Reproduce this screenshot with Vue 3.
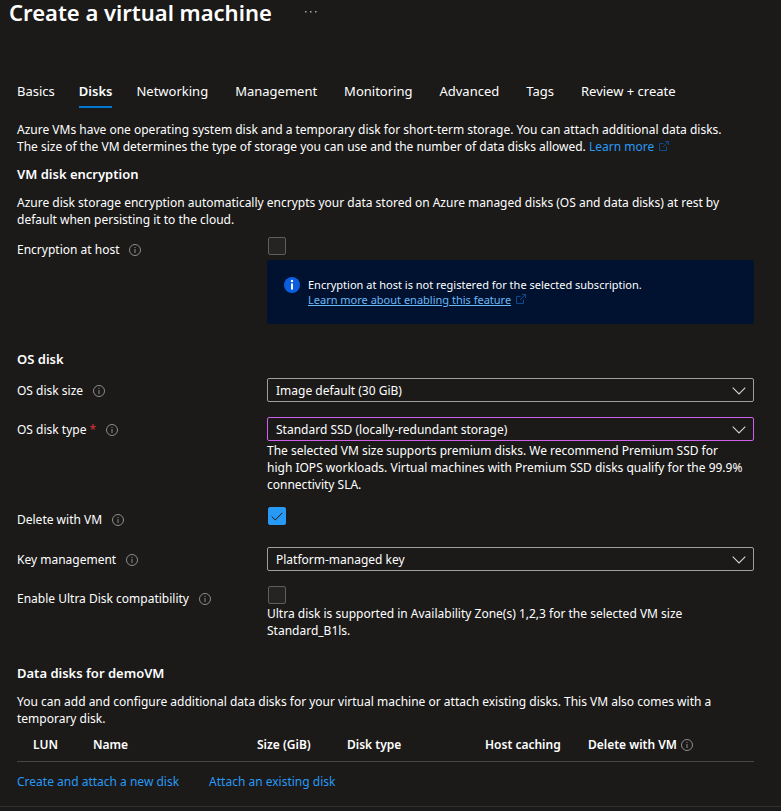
<script setup>
import { ref, h } from 'vue'

const tabs = ['Basics', 'Disks', 'Networking', 'Management', 'Monitoring', 'Advanced', 'Tags', 'Review + create']
const activeTab = ref('Disks')

const encryptionAtHost = ref(false)
const deleteWithVm = ref(true)
const ultraDisk = ref(false)
const diskSize = ref('Image default (30 GiB)')
const diskType = ref('Standard SSD (locally-redundant storage)')
const keyManagement = ref('Platform-managed key')

const InfoIcon = () =>
  h('svg', { viewBox: '0 0 12 12', width: 12, height: 12, 'aria-hidden': 'true' }, [
    h('circle', { cx: 6, cy: 6, r: 5.5, fill: 'none', stroke: '#8f8d8b' }),
    h('path', { d: 'M6 5v4M6 3v1', fill: 'none', stroke: '#8f8d8b' }),
  ])

const ExternalIcon = () =>
  h('svg', { viewBox: '0 0 10 10', width: 10, height: 10, 'aria-hidden': 'true' }, [
    h('path', {
      d: 'M4.5 2.5h-4v7h7v-4M6 .5h3.5v3.5M9.5 .5L4 6',
      fill: 'none',
      stroke: '#0d4a8c',
    }),
  ])

const Chevron = () =>
  h('svg', { viewBox: '0 0 14 8', width: 14, height: 8, 'aria-hidden': 'true' }, [
    h('path', { d: 'M.7 .7L7 7L13.3 .7', fill: 'none', stroke: '#d6d4d2', 'stroke-width': 1.1 }),
  ])
</script>

<template>
  <div class="page">
    <header class="title-bar">
      <h1>Create a virtual machine</h1>
      <button class="more" type="button" aria-label="More actions">
        <svg viewBox="0 0 12 2" width="12" height="2" aria-hidden="true">
          <path d="M0 0h1.5v1.5H0zM5 0h1.5v1.5H5zM10 0h1.5v1.5H10z" fill="#a8a6a4" />
        </svg>
      </button>
    </header>

    <main class="content">
      <nav class="tabs">
        <button
          v-for="tab in tabs"
          :key="tab"
          type="button"
          class="tab"
          :class="{ active: tab === activeTab }"
          @click="activeTab = tab"
        >{{ tab }}</button>
      </nav>

      <p class="intro">
        Azure VMs have one operating system disk and a temporary disk for short-term storage. You can attach additional data disks.<br>
        The size of the VM determines the type of storage you can use and the number of data disks allowed.
        <a class="link external" href="#">Learn more <ExternalIcon /></a>
      </p>

      <section>
        <h2>VM disk encryption</h2>
        <p>
          Azure disk storage encryption automatically encrypts your data stored on Azure managed disks (OS and data disks) at rest by<br>
          default when persisting it to the cloud.
        </p>
        <div class="row encryption">
          <div class="label"><label for="enc-host">Encryption at host</label><InfoIcon /></div>
          <div class="field">
            <span class="check">
              <input id="enc-host" v-model="encryptionAtHost" type="checkbox">
              <svg viewBox="0 0 12 9" width="12" height="9" aria-hidden="true"><path d="M.7 4.5L4.3 8L11.3 .8" /></svg>
            </span>
            <div class="notice">
              <svg viewBox="0 0 16 16" width="16" height="16" aria-hidden="true">
                <circle cx="8" cy="8" r="8" fill="#0a5fe0" />
                <circle cx="8" cy="4" r="1.2" fill="#fff" />
                <path d="M7 6.5h2v6H7z" fill="#fff" />
              </svg>
              <div class="notice-text">
                <span>Encryption at host is not registered for the selected subscription.</span>
                <a class="external" href="#"><span>Learn more about enabling this feature</span> <ExternalIcon /></a>
              </div>
            </div>
          </div>
        </div>
      </section>

      <section class="os-disk">
        <h2>OS disk</h2>
        <div class="form">
          <div class="row">
            <div class="label"><label for="disk-size">OS disk size</label><InfoIcon /></div>
            <div class="select">
              <select id="disk-size" v-model="diskSize"><option>Image default (30 GiB)</option></select>
              <Chevron />
            </div>
          </div>
          <div class="row">
            <div class="label"><label for="disk-type">OS disk type <span class="required">*</span></label><InfoIcon /></div>
            <div class="field">
              <div class="select changed">
                <select id="disk-type" v-model="diskType"><option>Standard SSD (locally-redundant storage)</option></select>
                <Chevron />
              </div>
              <p class="help">
                The selected VM size supports premium disks. We recommend Premium SSD for<br>
                high IOPS workloads. Virtual machines with Premium SSD disks qualify for the 99.9%<br>
                connectivity SLA.
              </p>
            </div>
          </div>
          <div class="row">
            <div class="label"><label for="delete-vm">Delete with VM</label><InfoIcon /></div>
            <span class="check tall">
              <input id="delete-vm" v-model="deleteWithVm" type="checkbox">
              <svg viewBox="0 0 12 9" width="12" height="9" aria-hidden="true"><path d="M.7 4.5L4.3 8L11.3 .8" /></svg>
            </span>
          </div>
          <div class="row">
            <div class="label"><label for="key-mgmt">Key management</label><InfoIcon /></div>
            <div class="select">
              <select id="key-mgmt" v-model="keyManagement"><option>Platform-managed key</option></select>
              <Chevron />
            </div>
          </div>
          <div class="row">
            <div class="label"><label for="ultra">Enable Ultra Disk compatibility</label><InfoIcon /></div>
            <div class="field">
              <span class="check">
                <input id="ultra" v-model="ultraDisk" type="checkbox">
                <svg viewBox="0 0 12 9" width="12" height="9" aria-hidden="true"><path d="M.7 4.5L4.3 8L11.3 .8" /></svg>
              </span>
              <p class="help">
                Ultra disk is supported in Availability Zone(s) 1,2,3 for the selected VM size<br>
                Standard_B1ls.
              </p>
            </div>
          </div>
        </div>
      </section>

      <section class="data-disks">
        <h2>Data disks for demoVM</h2>
        <p>
          You can add and configure additional data disks for your virtual machine or attach existing disks. This VM also comes with a<br>
          temporary disk.
        </p>
        <table>
          <thead>
            <tr>
              <th class="lun">LUN</th>
              <th class="name">Name</th>
              <th class="size">Size (GiB)</th>
              <th class="type">Disk type</th>
              <th class="caching">Host caching</th>
              <th>Delete with VM <InfoIcon /></th>
            </tr>
          </thead>
        </table>
        <div class="actions">
          <a class="link" href="#">Create and attach a new disk</a>
          <a class="link" href="#">Attach an existing disk</a>
        </div>
      </section>
    </main>
    <footer class="footer"></footer>
  </div>
</template>

<style>
body {
  background: #1b1a19;
}
</style>

<style scoped>
.page {
  color: #fff;
  font-family: "Noto Sans", "Open Sans", sans-serif;
  font-size: 12px;
  line-height: 17px;
}

.title-bar {
  display: flex;
  align-items: center;
  gap: 33px;
  height: 23px;
  padding-left: 9px;
}

h1,
h2,
p {
  margin: 0;
}

h1 {
  font-size: 22px;
  line-height: 22px;
  font-weight: 600;
}

button {
  border: 0;
  padding: 0;
  background: none;
  color: inherit;
  font: inherit;
  cursor: pointer;
}

.more {
  display: flex;
}

.content {
  padding: 57px 27px 0 17px;
}

.tabs {
  display: flex;
  gap: 24px;
  margin-bottom: 13px;
}

.tab {
  height: 28px;
  padding: 2px 0 6px;
  border-bottom: 2px solid transparent;
  font-size: 13px;
  line-height: 18px;
  white-space: nowrap;
}

.tab:nth-child(n + 4) {
  margin-left: 3px;
}

.tab.active {
  border-color: #0078d4;
  font-weight: 600;
}

p {
  white-space: nowrap;
}

.link {
  color: #2899f5;
  text-decoration: none;
}

.external svg {
  margin-left: 2px;
}

h2 {
  padding: 11px 0;
  font-size: 13px;
  line-height: 17px;
  font-weight: 600;
}

.row {
  display: grid;
  grid-template-columns: 250px minmax(0, 1fr);
  align-items: start;
}

.label {
  display: flex;
  align-items: center;
  gap: 10px;
  padding-top: 4px;
}

.required {
  color: #d13438;
}

.encryption {
  padding-top: 9px;
}

.check {
  position: relative;
  display: block;
  width: 18px;
  height: 18px;
  margin-left: 1px;
}

.check.tall {
  margin-bottom: 7px;
}

.check input {
  appearance: none;
  display: block;
  box-sizing: border-box;
  width: 18px;
  height: 18px;
  margin: 0;
  border: 1px solid #605e5c;
  border-radius: 2px;
  background: #252423;
}

.check input:checked {
  border-color: #2899f5;
  background: #2899f5;
}

.check svg {
  position: absolute;
  top: 5px;
  left: 3px;
  display: none;
  fill: none;
  stroke: #1b1a19;
  pointer-events: none;
}

.check input:checked + svg {
  display: block;
}

.notice {
  display: flex;
  gap: 8px;
  margin-top: 5px;
  padding: 17px;
  border-radius: 2px;
  background: #00122f;
}

.notice-text {
  display: flex;
  flex-direction: column;
  align-items: flex-start;
  font-size: 11px;
  line-height: 15px;
}

.notice a {
  color: #6cb8f6;
  text-decoration: none;
}

.notice a span {
  text-decoration: underline;
}

.os-disk h2 {
  padding-top: 27px;
  padding-bottom: 10px;
}

.form {
  display: grid;
  gap: 15px;
}

.select {
  position: relative;
}

.select select {
  appearance: none;
  display: block;
  width: 100%;
  height: 24px;
  padding: 0 32px 0 8px;
  border: 1px solid #a19f9d;
  border-radius: 2px;
  background: #1b1a19;
  color: #fff;
  font: inherit;
}

.select.changed select {
  border-color: #d15fee;
}

.select svg {
  position: absolute;
  top: 9px;
  right: 8px;
  pointer-events: none;
}

.help {
  margin: 1px 0 -1px;
}

.data-disks h2 {
  padding-top: 27px;
}

table {
  width: 100%;
  border-collapse: collapse;
  table-layout: fixed;
}

th {
  height: 34px;
  padding: 0 0 0 16px;
  border-bottom: 1px solid #484644;
  font-weight: 600;
  text-align: left;
  white-space: nowrap;
}

th svg {
  margin-left: 1px;
  vertical-align: -2px;
}

.lun {
  width: 44px;
}

.name {
  width: 148px;
}

.size {
  width: 74px;
}

.type {
  width: 122px;
}

.caching {
  width: 87px;
}

.actions {
  display: flex;
  gap: 30px;
  padding: 11px 0 16px;
}

.footer {
  height: 4px;
  border-top: 1px solid #323130;
}
</style>
